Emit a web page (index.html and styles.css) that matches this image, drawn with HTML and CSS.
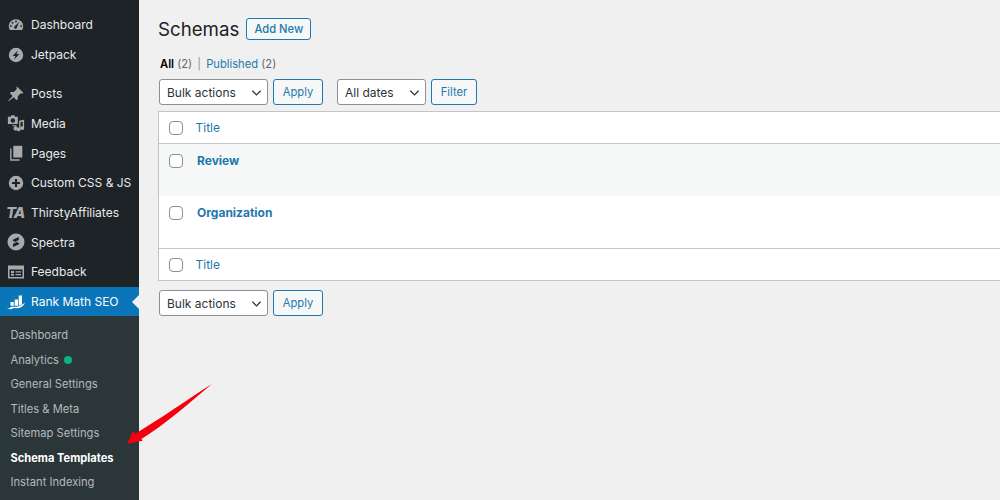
FILE: index.html
```html
<!DOCTYPE html>
<html lang="en">
<head>
<meta charset="utf-8">
<title>Schemas</title>
<link rel="stylesheet" href="styles.css">
</head>
<body>
<div class="page">
<nav class="sidebar">
  <ul class="menu">
    <li class="item"><svg class="ico" viewBox="0 0 20 20"><path fill-rule="evenodd" d="M10 3.500C5.600 3.500 2 7 2 11.400c0 1.500.4 2.900 1.200 4.100h13.600c.8-1.200 1.200-2.600 1.200-4.100 0-4.400-3.600-7.900-8-7.900zM10 5a1 1 0 1 1 0 2 1 1 0 0 1 0-2zM6.200 6.500a1 1 0 1 1 0 2 1 1 0 0 1 0-2zm7.600 0-2.700 5.700a1.600 1.600 0 1 1-2.300-1zM4.300 10a1 1 0 1 1 0 2 1 1 0 0 1 0-2zm11.400 0a1 1 0 1 1 0 2 1 1 0 0 1 0-2z"/></svg><span>Dashboard</span></li>
    <li class="item"><svg class="ico" viewBox="0 0 20 20"><path fill-rule="evenodd" d="M10 2a8 8 0 1 0 0 16 8 8 0 0 0 0-16zM11.800 5 6.200 11h3.100l-1.100 4 5.600-6h-3.100z"/></svg><span>Jetpack</span></li>
    <li class="item gap"><svg class="ico" viewBox="0 0 20 20"><path d="M11 1.800l7.200 6.900-1.300 1.100-1.600-.5-3.300 3.100-.1 3.200-1.300 1.300-3.100-3.300L1.800 18l-.4-.4 4.800-5.400-3-3 1.200-1.300 3.200-.1 3.300-3.300-.4-1.600z"/></svg><span>Posts</span></li>
    <li class="item"><svg class="ico" viewBox="0 0 20 20"><path fill-rule="evenodd" d="M1 3h3l1-1.500h3L9 3h3v8H1zM6.500 4.800a2.500 2.500 0 1 0 0 5 2.500 2.500 0 0 0 0-5z"/><path d="M13.500 7.500l5.500-1v9.200a2.100 2.100 0 1 1-1.500-2V8.600l-2.500.5v8a2.100 2.100 0 1 1-1.500-2zM6 12.500h4.500v1.500a2.300 2.300 0 1 1-1.500-.2v-.3H6z"/></svg><span>Media</span></li>
    <li class="item"><svg class="ico" viewBox="0 0 20 20"><path d="M7 2h10v13H7z"/><path d="M5 5v12h9v1.500H3.500V5z"/></svg><span>Pages</span></li>
    <li class="item"><svg class="ico" viewBox="0 0 20 20"><path fill-rule="evenodd" d="M10 2a8 8 0 1 0 0 16 8 8 0 0 0 0-16zM8.800 5.500h2.400v3.300h3.300v2.400h-3.300v3.300H8.800v-3.300H5.500V8.800h3.300z"/></svg><span>Custom CSS &amp; JS</span></li>
    <li class="item"><span class="ta">TA</span><span>ThirstyAffiliates</span></li>
    <li class="item"><svg class="ico ico-lg" viewBox="0 0 20 20"><path fill-rule="evenodd" d="M10 1.500a8.500 8.500 0 1 0 0 17 8.500 8.500 0 0 0 0-17zM12.800 5v3.200L9.500 9.300l3.300 1.800c.6.400.5 1-.1 1.400L7 15v-3.200l3.300-1.200L7.100 9c-.6-.4-.5-1 .1-1.400z"/></svg><span>Spectra</span></li>
    <li class="item"><svg class="ico ico-lg" viewBox="0 0 20 20"><path fill-rule="evenodd" d="M2 3.500h16v13H2zM3.500 7.500v7.500h13V7.500zM5 9h3v2H5zm0 2.800h3v2H5zM9.500 9.200h5.500v1.300H9.500zm0 2.800h5.500v1.300H9.500z"/></svg><span>Feedback</span></li>
    <li class="item active"><svg class="ico ico-lg ico-white" viewBox="0 0 20 20"><path d="M4.500 10h3.300v3.800H4.500zM8.700 7.500H12v6.300H8.700zM12.700 3.500H16V12.500l-3.300 1.300zM1 16.500c2-.1 3.500-1 4.500-1.800h5.500c2.500-.2 5-1.300 7.900-4.200-.8 3-3.300 5-6 5.400l-2.600.4-2.300-.2-3.300 1.200z"/></svg><span>Rank Math SEO</span></li>
  </ul>
  <ul class="submenu">
    <li class="sub">Dashboard</li>
    <li class="sub">Analytics<i class="dot"></i></li>
    <li class="sub">General Settings</li>
    <li class="sub">Titles &amp; Meta</li>
    <li class="sub">Sitemap Settings</li>
    <li class="sub current">Schema Templates</li>
    <li class="sub">Instant Indexing</li>
  </ul>
</nav>
<main class="main">
  <header class="head">
    <h1 class="title">Schemas</h1>
    <a class="btn add">Add New</a>
  </header>
  <p class="views"><b>All</b> <span class="count">(2)</span> <span class="sep">|</span> <a class="link">Published</a> <span class="count">(2)</span></p>
  <div class="tablenav">
    <div class="select bulk">Bulk actions<svg class="chev" viewBox="0 0 12 8"><path d="M1.500 1.500 6 6l4.500-4.500"/></svg></div>
    <a class="btn apply">Apply</a>
    <div class="select dates">All dates<svg class="chev" viewBox="0 0 12 8"><path d="M1.500 1.500 6 6l4.500-4.500"/></svg></div>
    <a class="btn filter">Filter</a>
  </div>
  <div class="table">
    <div class="row hdr"><i class="check"></i><a class="link">Title</a></div>
    <div class="row post alt"><i class="check"></i><a class="link strong">Review</a></div>
    <div class="row post"><i class="check"></i><a class="link strong">Organization</a></div>
    <div class="row ftr"><i class="check"></i><a class="link">Title</a></div>
  </div>
  <div class="tablenav bottom">
    <div class="select bulk">Bulk actions<svg class="chev" viewBox="0 0 12 8"><path d="M1.500 1.500 6 6l4.500-4.500"/></svg></div>
    <a class="btn apply">Apply</a>
  </div>
</main>
</div>
<svg class="arrow" viewBox="0 0 100 72"><path d="M91.700 6C70 20 40 41 15.500 55.500L12.700 53.300 7.300 65.700 22.700 62.700 21.500 61C44 47 72 23 91.700 6z"/></svg>
</body>
</html>
```
FILE: styles.css
```css
* { box-sizing: border-box; }
html, body { margin: 0; height: 500px; overflow: hidden; }
body { background: #f0f0f1; font-family: Inter, "Liberation Sans", sans-serif; font-size: 12px; color: #3c434a; }
.page { display: flex; height: 500px; }
ul { list-style: none; margin: 0; padding: 0; }
.sidebar { width: 139px; flex: none; background: #1d2327; padding-top: 10px; overflow: hidden; }
.item { display: flex; align-items: center; height: 29.700px; color: #e8eaeb; white-space: nowrap; }
.item.gap { margin-top: 9.500px; }
.ico { width: 18px; height: 18px; margin: 0 6px 0 7px; fill: #a7aaad; flex: none; }
.ico-lg { width: 20px; height: 20px; margin: 0 5px 0 6px; }
.ico-white { fill: #fff; }
.ta { width: 25px; margin-left: 6px; font-weight: 800; font-style: italic; font-size: 15px; color: #a7aaad; letter-spacing: -1px; flex: none; }
.active { background: #0a75b8; color: #fff; position: relative; }
.active::after { content: ""; position: absolute; right: 0; top: 8px; border: 7px solid transparent; border-right-color: #f0f0f1; border-left-width: 0; }
.submenu { background: #2b3639; padding-top: 7px; height: 190px; }
.sub { height: 24.500px; line-height: 24.500px; padding-left: 10.500px; font-size: 11.200px; color: #b4b9be; white-space: nowrap; }
.current { color: #fff; font-weight: 700; font-size: 11.100px; }
.dot { display: inline-block; width: 8px; height: 8px; border-radius: 50%; background: #10b07f; margin-left: 5px; }
.main { flex: 1; min-width: 0; padding: 18px 0 0 19px; overflow: hidden; }
.head { display: flex; align-items: center; gap: 7px; height: 22px; }
.title { margin: 0; font-size: 18.700px; font-weight: 400; color: #1d2327; }
.btn { display: flex; align-items: center; justify-content: center; border: 1px solid #1f78ad; border-radius: 3px; background: #f6f7f7; color: #1f78ad; }
.add { width: 65px; height: 22px; font-size: 11.200px; font-weight: 500; }
.views { margin: 0; padding: 17px 0 0 2px; height: 39px; font-size: 11.200px; line-height: 14px; color: #646970; }
.views b { color: #000; font-weight: 600; }
.sep { margin: 0 2px; color: #8c8f94; }
.link { color: #1f78ad; }
.tablenav { display: flex; align-items: center; margin-left: 1px; height: 26px; }
.select { position: relative; display: flex; align-items: center; height: 26px; padding-left: 7px; border: 1px solid #8c8f94; border-radius: 3px; background: #fff; color: #2c3338; }
.chev { position: absolute; right: 5px; top: 9px; width: 11px; height: 8px; fill: none; stroke: #2c3338; stroke-width: 1.400; }
.bulk { width: 109px; }
.dates { width: 89px; margin-left: 14px; }
.apply { width: 50px; height: 26px; margin-left: 5px; font-size: 11.200px; }
.filter { width: 46px; height: 26px; margin-left: 5px; font-size: 11.200px; }
.table { margin-top: 6px; width: 900px; background: #fff; border: 1px solid #c3c4c7; border-right: 0; }
.row { display: flex; align-items: center; padding-left: 10px; }
.hdr { height: 32px; padding-bottom: 0; border-bottom: 1px solid #c3c4c7; }
.ftr { height: 32px; border-top: 1px solid #c3c4c7; }
.post { height: 52px; align-items: flex-start; padding-top: 8.500px; }
.alt { background: #f6f7f7; }
.check { width: 14px; height: 14px; border: 1px solid #8c8f94; border-radius: 4px; background: #fff; margin-right: 12.500px; flex: none; }
.post .check { margin-right: 14px; margin-top: 1.500px; }
.strong { font-weight: 700; }
.bottom { margin-top: 9px; }
.arrow { position: absolute; left: 120px; top: 378px; width: 100px; height: 72px; fill: #f5000f; }
```
